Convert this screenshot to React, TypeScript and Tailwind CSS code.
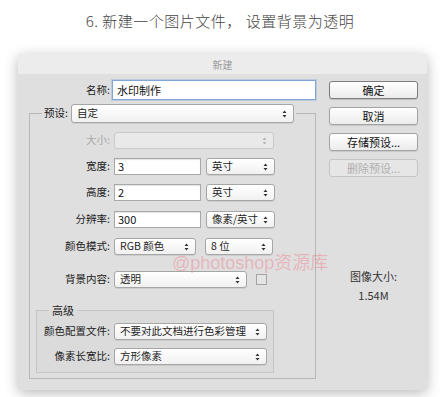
import React from 'react';

const font = { fontFamily: '"Noto Sans CJK SC", "Noto Sans", sans-serif' };

function Arrows({ dim }: { dim?: boolean }) {
  return (
    <svg width="5" height="8" viewBox="0 0 5 8" className="shrink-0">
      <path d="M2.5 0.5 L4.5 3 L0.5 3 Z M2.5 7.5 L4.5 5 L0.5 5 Z" fill={dim ? '#b5b5b5' : '#333'} />
    </svg>
  );
}

function Select({
  value,
  className,
  disabled,
}: {
  value?: string;
  className: string;
  disabled?: boolean;
}) {
  return (
    <div
      className={
        'flex items-center justify-between rounded-[3px] border pl-[5px] pr-[6px] text-[10.5px] leading-none ' +
        (disabled
          ? 'border-[#c9c9c9] bg-[#e9e9e9] text-[#aaa]'
          : 'border-[#a6a6a6] bg-gradient-to-b from-white to-[#f1f1f1] text-[#1e1e1e] shadow-[0_1px_0_rgba(0,0,0,0.08)]') +
        ' ' +
        className
      }
    >
      <span className="whitespace-nowrap">{value}</span>
      <Arrows dim={disabled} />
    </div>
  );
}

function Input({ value, className }: { value: string; className: string }) {
  return (
    <div
      className={
        'flex items-center border border-[#a9a9a9] bg-white pl-[3px] text-[11px] leading-none text-[#111] shadow-[inset_0_1px_1px_rgba(0,0,0,0.12)] ' +
        className
      }
    >
      {value}
    </div>
  );
}

function Label({ children, w, dim }: { children: React.ReactNode; w: string; dim?: boolean }) {
  return (
    <span
      className={
        'shrink-0 text-right text-[10.5px] leading-none ' +
        (dim ? 'text-[#a9a9a9] ' : 'text-[#1a1a1a] ') +
        w
      }
    >
      {children}
    </span>
  );
}

function Button({ children, primary, disabled }: { children: React.ReactNode; primary?: boolean; disabled?: boolean }) {
  return (
    <div
      className={
        'flex h-[18px] w-[89px] items-center justify-center rounded-[3px] border text-[11px] leading-none ' +
        (disabled
          ? 'border-[#c4c4c4] bg-[#e6e6e6] text-[#b0b0b0]'
          : primary
            ? 'border-[#7d7d7d] bg-gradient-to-b from-white to-[#ececec] text-[#111] shadow-[0_1px_1px_rgba(0,0,0,0.15)]'
            : 'border-[#a3a3a3] bg-gradient-to-b from-white to-[#ececec] text-[#111] shadow-[0_1px_1px_rgba(0,0,0,0.1)]')
      }
    >
      {children}
    </div>
  );
}

export default function App() {
  return (
    <div className="relative flex h-[397px] w-[440px] flex-col overflow-hidden bg-white" style={font}>
      <p className="pt-[11px] text-center text-[15px] font-light leading-[20px] tracking-[0.5px] text-[#444]">
        6. 新建一个图片文件， 设置背景为透明
      </p>

      <div className="ml-[18px] mt-[23px] flex h-[336px] w-[409px] flex-col overflow-hidden rounded-[4px] bg-[#dfdfdf] shadow-[0_3px_14px_rgba(0,0,0,0.28)]">
        <div className="flex h-[20px] items-center justify-center bg-[#ececec] text-[10px] text-[#9b9b9b]">新建</div>

        <div className="flex">
          {/* left */}
          <div className="flex flex-col pl-[11px] pt-[6px]">
            <div className="flex items-center">
              <Label w="w-[81px]">名称:</Label>
              <div className="ml-[2px] flex h-[20px] w-[204px] items-center border border-[#7ea7d6] bg-white pl-[4px] text-[11px] leading-none text-[#111] shadow-[0_0_0_1px_rgba(126,167,214,0.35)]">
                水印制作
              </div>
            </div>

            <fieldset className="mt-[4px] h-[275px] w-[287px] border border-[#b8b8b8]">
              <legend className="ml-[12px] flex items-center px-[2px]">
                <span className="pr-[3px] text-[10.5px] leading-none text-[#1a1a1a]">预设:</span>
                <Select value="自定" className="h-[19px] w-[223px]" />
              </legend>

              <div className="mt-[9px] flex items-center gap-[4px]">
                <Label w="w-[80px]" dim>大小:</Label>
                <Select className="h-[17px] w-[160px]" disabled />
              </div>
              <div className="mt-[9px] flex items-center gap-[4px]">
                <Label w="w-[80px]">宽度:</Label>
                <Input value="3" className="h-[17px] w-[87px]" />
                <Select value="英寸" className="ml-[1px] h-[17px] w-[69px]" />
              </div>
              <div className="mt-[9px] flex items-center gap-[4px]">
                <Label w="w-[80px]">高度:</Label>
                <Input value="2" className="h-[17px] w-[87px]" />
                <Select value="英寸" className="ml-[1px] h-[17px] w-[69px]" />
              </div>
              <div className="mt-[10px] flex items-center gap-[4px]">
                <Label w="w-[80px]">分辨率:</Label>
                <Input value="300" className="h-[17px] w-[87px]" />
                <Select value="像素/英寸" className="ml-[1px] h-[17px] w-[69px]" />
              </div>
              <div className="mt-[10px] flex items-center gap-[4px]">
                <Label w="w-[80px]">颜色模式:</Label>
                <Select value="RGB 颜色" className="h-[17px] w-[82px]" />
                <Select value="8 位" className="ml-[5px] h-[17px] w-[68px]" />
              </div>
              <div className="mt-[16px] flex items-center gap-[4px]">
                <Label w="w-[80px]">背景内容:</Label>
                <Select value="透明" className="h-[17px] w-[133px]" />
                <div className="ml-[5px] h-[11px] w-[11px] border border-[#a3a3a3] bg-[#e4e4e4]" />
              </div>

              <fieldset className="ml-[6px] mt-[15px] h-[70px] w-[238px] border border-[#c6c6c6] bg-[#dbdbdb]">
                <legend className="ml-[12px] px-[3px] text-[11px] leading-[14px] text-[#222]">高级</legend>
                <div className="mt-[6px] flex items-center gap-[4px]">
                  <Label w="w-[73px]">颜色配置文件:</Label>
                  <Select value="不要对此文档进行色彩管理" className="h-[17px] w-[153px]" />
                </div>
                <div className="mt-[8px] flex items-center gap-[4px]">
                  <Label w="w-[73px]">像素长宽比:</Label>
                  <Select value="方形像素" className="h-[17px] w-[153px]" />
                </div>
              </fieldset>
            </fieldset>
          </div>

          {/* right */}
          <div className="ml-[13px] flex flex-col pt-[7px]">
            <div className="flex flex-col gap-[8px]">
              <Button primary>确定</Button>
              <Button>取消</Button>
              <Button>存储预设...</Button>
              <Button disabled>删除预设...</Button>
            </div>
            <p className="mt-[94px] text-center text-[11px] leading-none text-[#333]">图像大小:</p>
            <p className="mt-[8px] text-center text-[11px] leading-none text-[#333]">1.54M</p>
          </div>
        </div>
      </div>

      <span
        className="absolute left-[172px] top-[252px] text-[18px] leading-[22px] text-[rgba(240,110,125,0.38)]"
        style={{ fontFamily: '"Liberation Sans", "Noto Sans CJK SC", sans-serif' }}
      >
        @photoshop资源库
      </span>
    </div>
  );
}
